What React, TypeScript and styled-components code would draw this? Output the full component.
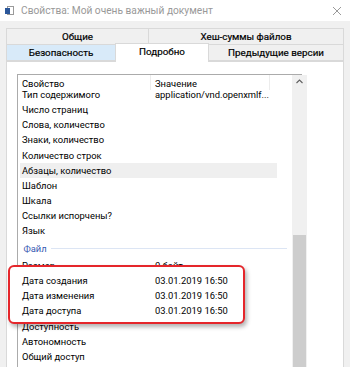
import React from 'react'
import styled, { createGlobalStyle } from 'styled-components'

const GlobalStyle = createGlobalStyle`
  html, body {
    margin: 0;
    padding: 0;
    background: #f0f0f0;
  }
  body {
    font-family: Roboto, 'Noto Sans', Arial, sans-serif;
    font-size: 9.4px;
    color: #000;
  }
`

const ROW_H = 15.15

const Window = styled.div`
  width: 350px;
  height: 367px;
  overflow: hidden;
  background: #f0f0f0;
  display: flex;
  flex-direction: column;
`

const TitleBar = styled.div`
  height: 21px;
  flex: none;
  background: #fff;
  display: flex;
  align-items: center;
  padding-left: 5px;
  padding-right: 8px;
`

const Title = styled.span`
  flex: 1;
  margin-left: 7px;
  color: #999;
  font-size: 10.2px;
  white-space: nowrap;
`

const CloseButton = styled.div`
  width: 10px;
  height: 10px;
  display: flex;
`

const Body = styled.div`
  padding: 8px 6px 0 6px;
  flex: 1;
  display: flex;
  flex-direction: column;
`

const TabRow = styled.div`
  display: flex;
  height: 16px;
  align-items: flex-end;
`

const Tab = styled.div<{ $w: number; $active?: boolean; $hover?: boolean }>`
  width: ${p => p.$w}px;
  height: ${p => (p.$active ? 19 : 17)}px;
  margin-bottom: ${p => (p.$active ? -1 : 0)}px;
  margin-right: -1px;
  box-sizing: border-box;
  border: 1px solid #d9d9d9;
  border-bottom: ${p => (p.$active ? 'none' : '1px solid #d9d9d9')};
  background: ${p => (p.$active ? '#fff' : p.$hover ? '#d8eaf9' : '#f0f0f0')};
  position: relative;
  z-index: ${p => (p.$active ? 2 : 0)};
  display: flex;
  align-items: ${p => (p.$active ? 'flex-start' : 'center')};
  padding-top: ${p => (p.$active ? 2 : 0)}px;
  justify-content: center;
  font-size: 9.8px;
  white-space: nowrap;
  color: #000;
  -webkit-text-stroke: 0.2px #000;
`

const Panel = styled.div`
  flex: 1;
  width: 338px;
  box-sizing: border-box;
  border: 1px solid #d9d9d9;
  border-bottom: none;
  background: #fff;
  padding: 12px 0 0 10px;
`

const ListView = styled.div`
  width: 285px;
  height: 320px;
  box-sizing: border-box;
  border: 1px solid #ababab;
  border-bottom: none;
  display: flex;
`

const ListContent = styled.div`
  flex: 1;
  display: flex;
  flex-direction: column;
`

const Header = styled.div`
  height: 12px;
  display: grid;
  grid-template-columns: 133px 119px 1fr;
  position: relative;
  z-index: 1;
`

const HeaderCell = styled.div<{ $last?: boolean }>`
  padding-left: 4px;
  line-height: 15px;
  height: 15px;
  padding-top: 1px;
  box-sizing: border-box;
  border-right: ${p => (p.$last ? 'none' : '1px solid #ececec')};
  white-space: nowrap;
`

const Row = styled.div<{ $selected?: boolean }>`
  height: ${ROW_H}px;
  line-height: ${ROW_H}px;
  margin: 0 15px 0 2px;
  display: grid;
  grid-template-columns: 131px 1fr;
  background: ${p => (p.$selected ? '#efefef' : 'transparent')};
  white-space: nowrap;
`

const Cell = styled.div<{ $value?: boolean }>`
  padding-left: ${p => (p.$value ? 4 : 2)}px;
`

const Group = styled.div`
  height: 19.6px;
  padding-top: 1px;
  box-sizing: border-box;
  display: flex;
  align-items: center;
  padding-left: 5.5px;
  margin-right: 5px;
  color: #3558b2;
`

const GroupLine = styled.div`
  flex: 1;
  height: 1px;
  margin-left: 4px;
  background: #dce5f4;
`

const Callout = styled.div`
  position: relative;
  z-index: 2;
  margin: -8.35px 47px -5.2px -10px;
  padding: 6.35px 0 3.2px 8px;
  border: 2px solid #e5262b;
  border-radius: 6px;
  background: #fff;
  box-shadow: 2px 3px 4px rgba(0, 0, 0, 0.3);
`

const ScrollBar = styled.div`
  width: 15px;
  flex: none;
  background: #f0f0f0;
  display: flex;
  flex-direction: column;
`

const ScrollArrow = styled.div`
  height: 17px;
  display: flex;
  align-items: center;
  justify-content: center;
`

const ScrollThumb = styled.div`
  margin: 146px 1px 0 1px;
  height: 200px;
  background: #cdcdcd;
`

const DocIcon = () => (
  <svg width="9" height="9" viewBox="0 0 9 9">
    <rect x="2.5" y="0.5" width="6" height="8" fill="#fff" stroke="#9a9a9a" />
    <rect x="0" y="2" width="5" height="6" fill="#2b579a" />
  </svg>
)

const CloseIcon = () => (
  <svg width="10" height="10" viewBox="0 0 10 10">
    <path d="M1 1 L9 9 M9 1 L1 9" stroke="#9a9a9a" strokeWidth="1" />
  </svg>
)

const UpChevron = () => (
  <svg width="7" height="5" viewBox="0 0 7 5">
    <path d="M0.5 4 L3.5 1 L6.5 4" stroke="#606060" strokeWidth="1.1" fill="none" />
  </svg>
)

type Prop = { name: string; value?: string; selected?: boolean }

const topRows: Prop[] = [
  { name: 'Тип содержимого', value: 'application/vnd.openxmlf...' },
  { name: 'Число страниц' },
  { name: 'Слова, количество' },
  { name: 'Знаки, количество' },
  { name: 'Количество строк' },
  { name: 'Абзацы, количество', selected: true },
  { name: 'Шаблон' },
  { name: 'Шкала' },
  { name: 'Ссылки испорчены?' },
  { name: 'Язык' },
]

const dateRows: Prop[] = [
  { name: 'Дата создания', value: '03.01.2019 16:50' },
  { name: 'Дата изменения', value: '03.01.2019 16:50' },
  { name: 'Дата доступа', value: '03.01.2019 16:50' },
]

const tailRows: Prop[] = [
  { name: 'Доступность' },
  { name: 'Автономность' },
  { name: 'Общий доступ' },
]

const PropRow = ({ p }: { p: Prop }) => (
  <Row $selected={p.selected}>
    <Cell>{p.name}</Cell>
    <Cell $value>{p.value}</Cell>
  </Row>
)

export default function App() {
  return (
    <Window>
      <GlobalStyle />
      <TitleBar>
        <DocIcon />
        <Title>Свойства: Мой очень важный документ</Title>
        <CloseButton>
          <CloseIcon />
        </CloseButton>
      </TitleBar>
      <Body>
        <TabRow>
          <Tab $w={143}>Общие</Tab>
          <Tab $w={196}>Хеш-суммы файлов</Tab>
        </TabRow>
        <TabRow>
          <Tab $w={110} $hover>Безопасность</Tab>
          <Tab $w={94} $active>Подробно</Tab>
          <Tab $w={136}>Предыдущие версии</Tab>
        </TabRow>
        <Panel>
          <ListView>
            <ListContent>
              <Header>
                <HeaderCell>Свойство</HeaderCell>
                <HeaderCell>Значение</HeaderCell>
                <HeaderCell $last />
              </Header>
              {topRows.map(p => (
                <PropRow key={p.name} p={p} />
              ))}
              <Group>
                Файл
                <GroupLine />
              </Group>
              <PropRow p={{ name: 'Размер', value: '0 байт' }} />
              <Callout>
                {dateRows.map(p => (
                  <PropRow key={p.name} p={p} />
                ))}
              </Callout>
              {tailRows.map(p => (
                <PropRow key={p.name} p={p} />
              ))}
            </ListContent>
            <ScrollBar>
              <ScrollArrow>
                <UpChevron />
              </ScrollArrow>
              <ScrollThumb />
            </ScrollBar>
          </ListView>
        </Panel>
      </Body>
    </Window>
  )
}
